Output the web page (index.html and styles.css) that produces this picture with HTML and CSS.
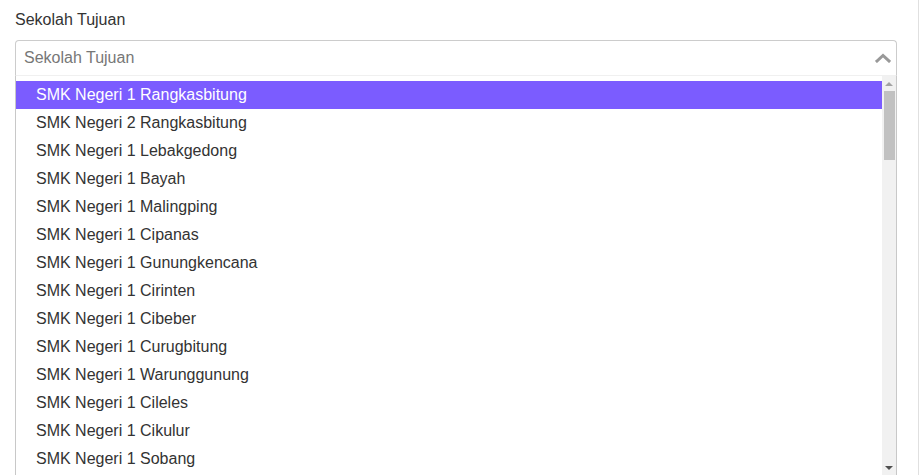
FILE: index.html
```html
<!DOCTYPE html>
<html lang="id">
<head>
<meta charset="utf-8">
<title>Sekolah Tujuan</title>
<link rel="stylesheet" href="styles.css">
</head>
<body>
<div class="page">
  <div class="field">
    <label class="label">Sekolah Tujuan</label>
    <div class="select">
      <div class="select-box">
        <span class="placeholder">Sekolah Tujuan</span>
        <svg class="chevron" width="16" height="10" viewBox="0 0 16 10" aria-hidden="true">
          <path d="M2 8 L8 2.5 L14 8" fill="none" stroke="#999" stroke-width="3" stroke-linecap="square" stroke-linejoin="miter"/>
        </svg>
      </div>
      <div class="popup">
        <ul class="options">
          <li class="active">SMK Negeri 1 Rangkasbitung</li>
          <li>SMK Negeri 2 Rangkasbitung</li>
          <li>SMK Negeri 1 Lebakgedong</li>
          <li>SMK Negeri 1 Bayah</li>
          <li>SMK Negeri 1 Malingping</li>
          <li>SMK Negeri 1 Cipanas</li>
          <li>SMK Negeri 1 Gunungkencana</li>
          <li>SMK Negeri 1 Cirinten</li>
          <li>SMK Negeri 1 Cibeber</li>
          <li>SMK Negeri 1 Curugbitung</li>
          <li>SMK Negeri 1 Warunggunung</li>
          <li>SMK Negeri 1 Cileles</li>
          <li>SMK Negeri 1 Cikulur</li>
          <li>SMK Negeri 1 Sobang</li>
        </ul>
        <div class="scrollbar">
          <span class="sb-btn"><span class="arrow-up"></span></span>
          <span class="thumb"></span>
          <span class="sb-fill"></span>
          <span class="sb-btn"><span class="arrow-down"></span></span>
        </div>
      </div>
    </div>
  </div>
</div>
</body>
</html>
```

FILE: styles.css
```css
html, body {
  margin: 0;
  height: 100%;
  overflow: hidden;
  background: #fff;
}

body {
  font-family: "Liberation Sans", Arial, sans-serif;
  font-size: 16px;
  color: #333;
}

.page {
  width: 918px;
  height: 475px;
  border-right: 1px solid #e0e0e0;
}

.field {
  padding: 10px 0 0 15px;
}

.label {
  display: block;
  line-height: 20px;
  margin-bottom: 10px;
  color: #333;
}

.select {
  width: 882px;
}

.select-box {
  height: 36px;
  box-sizing: border-box;
  border: 1px solid #ccc;
  border-bottom-color: #f0f0f0;
  border-radius: 4px 4px 0 0;
  display: flex;
  align-items: center;
  justify-content: space-between;
  padding: 0 5px 0 8px;
}

.placeholder {
  color: #777;
  line-height: 20px;
}

.chevron {
  display: block;
}

.popup {
  height: 399px;
  box-sizing: border-box;
  border-left: 1px solid #c8c8c8;
  border-right: 1px solid #c8c8c8;
  display: flex;
  overflow: hidden;
}

.options {
  flex: 1;
  margin: 0;
  padding: 5px 0 0;
  list-style: none;
  overflow: hidden;
}

.options li {
  height: 28px;
  line-height: 28px;
  padding-left: 20px;
  white-space: nowrap;
  color: #333;
}

.options li.active {
  background: #7b5cff;
  color: #fff;
}

.scrollbar {
  width: 14px;
  flex: none;
  background: #f1f1f1;
  display: flex;
  flex-direction: column;
}

.sb-btn {
  height: 15px;
  flex: none;
  display: flex;
  align-items: center;
  justify-content: center;
}

.arrow-up {
  width: 0;
  height: 0;
  border-left: 4px solid transparent;
  border-right: 4px solid transparent;
  border-bottom: 4px solid #a3a3a3;
}

.arrow-down {
  width: 0;
  height: 0;
  border-left: 4px solid transparent;
  border-right: 4px solid transparent;
  border-top: 4px solid #505050;
}

.thumb {
  height: 69px;
  margin: 0 1px 0 2px;
  background: #c1c1c1;
  flex: none;
}

.sb-fill {
  flex: 1;
}
```
